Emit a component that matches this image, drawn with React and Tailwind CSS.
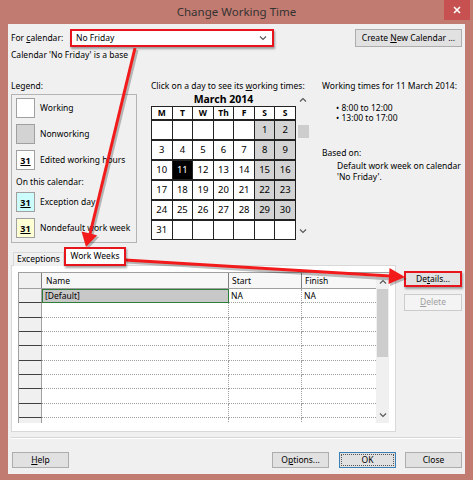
import React from 'react';

// March 2014 starts on a Saturday
const weeks = [
  [null, null, null, null, null, 1, 2],
  [3, 4, 5, 6, 7, 8, 9],
  [10, 11, 12, 13, 14, 15, 16],
  [17, 18, 19, 20, 21, 22, 23],
  [24, 25, 26, 27, 28, 29, 30],
  [31, null, null, null, null, null, null],
];

const dayNames = ['M', 'T', 'W', 'Th', 'F', 'S', 'S'];

const Btn = ({ children, className = '' }) => (
  <div className={`flex items-center justify-center border border-[#adadad] bg-[#e1e1e1] ${className}`}>
    <span className="whitespace-pre">{children}</span>
  </div>
);

const Chevron = ({ up, className = '' }) => (
  <svg width="8" height="5" viewBox="0 0 8 5" className={className}>
    <polyline
      points={up ? '1,4.5 4,1.5 7,4.5' : '1,0.5 4,3.5 7,0.5'}
      fill="none"
      stroke="#555"
      strokeWidth="1.1"
    />
  </svg>
);

const Swatch = ({ bg, label, mark }) => (
  <div className="flex items-center whitespace-nowrap">
    <div className={`flex h-[20px] w-[19px] shrink-0 items-center justify-center border border-[#a0a0a0] ${bg}`}>
      {mark && <span className="text-[9px] font-bold underline leading-none">31</span>}
    </div>
    <span className="ml-[5px]">{label}</span>
  </div>
);

const cellClass = (day, col) => {
  if (day === 11) return 'bg-black text-white';
  if (day && col >= 5) return 'bg-[#d3d3d3]';
  return 'bg-white';
};

const Calendar = () => (
  <div className="grid w-[145px] grid-cols-7 gap-x-px gap-y-[2px] border border-[#222] bg-[#222]">
    {dayNames.map((d, i) => (
      <div key={'h' + i} className="flex h-[12px] items-center justify-center bg-white font-bold leading-none">
        {d}
      </div>
    ))}
    {weeks.flatMap((week, r) =>
      week.map((day, c) => (
        <div
          key={r + '-' + c}
          className={`flex h-[18px] items-center justify-center text-[9.5px] ${cellClass(day, c)}`}
        >
          {day}
        </div>
      ))
    )}
  </div>
);

const WorkWeekTable = () => {
  const rows = Array.from({ length: 10 });
  return (
    <div className="flex h-[151px] w-[371px] overflow-hidden border-l border-t border-[#a0a0a0]">
      <div className="flex w-[357px] flex-col">
        {/* header */}
        <div className="flex h-[16px] shrink-0 border-b border-[#a0a0a0] bg-[#f7f7f7]">
          <div className="w-[23px] border-r border-[#808080] bg-[#f0f0f0]" />
          <div className="w-[187px] border-r border-[#808080] pl-[4px] leading-[15px]">Name</div>
          <div className="w-[73px] border-r border-[#808080] pl-[3px] leading-[15px]">Start</div>
          <div className="w-[74px] pl-[3px] leading-[15px]">Finish</div>
        </div>
        {rows.map((_, i) => (
          <div key={i} className="flex h-[14.33px] shrink-0">
            <div className="w-[23px] border-b border-r border-[#404040] border-r-[#a0a0a0] bg-[#f0f0f0]" />
            {i === 0 ? (
              <div className="w-[187px] border border-[#2f7d3a] bg-[#c8c8c8] pl-[2px] leading-[12px]">[Default]</div>
            ) : (
              <div className="w-[187px] border-b border-r border-dotted border-[#a0a0a0] bg-white" />
            )}
            <div className="w-[73px] border-b border-r border-dotted border-[#a0a0a0] bg-white pl-[2px] leading-[13px]">
              {i === 0 ? 'NA' : ''}
            </div>
            <div className="w-[74px] border-b border-dotted border-[#a0a0a0] bg-white pl-[2px] leading-[13px]">
              {i === 0 ? 'NA' : ''}
            </div>
          </div>
        ))}
      </div>
      {/* scrollbar */}
      <div className="flex w-[13px] flex-col items-center bg-[#f0f0f0]">
        <div className="flex h-[16px] items-center">
          <Chevron up />
        </div>
        <div className="h-[68px] w-[11px] bg-[#cdcdcd]" />
        <div className="flex-1" />
        <div className="mb-[2px] flex h-[12px] items-center">
          <Chevron />
        </div>
      </div>
    </div>
  );
};

export default function App() {
  return (
    <div className="relative flex h-[480px] w-[473px] flex-col bg-[#c27b70] font-['Noto_Sans',sans-serif] text-[8.5px] text-black">
      {/* Title bar */}
      <div className="relative flex h-[24px] shrink-0 items-center justify-center">
        <span className="text-[11.5px] text-[#333]">Change Working Time</span>
        <div className="absolute right-[3px] top-0 flex h-[20px] w-[26px] items-center justify-center bg-[#c75050]">
          <svg width="8" height="8" viewBox="0 0 8 8">
            <path d="M1 1 L7 7 M7 1 L1 7" stroke="#fff" strokeWidth="1.6" />
          </svg>
        </div>
      </div>

      {/* Client area */}
      <div className="mx-[8px] mb-[6px] flex flex-1 flex-col bg-[#f0f0f0] px-[3px]">
        {/* For calendar row */}
        <div className="mt-[5px] flex h-[18px] items-center">
          <span className="w-[59px]">
            For <span className="underline">c</span>alendar:
          </span>
          <div className="flex h-[18px] w-[204px] items-center justify-between border-2 border-[#e8141b] bg-white pl-[4px] pr-[5px] shadow-[1px_2px_2px_rgba(0,0,0,0.35)]">
            <span>No Friday</span>
            <Chevron />
          </div>
          <div className="flex-1" />
          <Btn className="h-[18px] w-[107px]">
            Create <span className="underline">N</span>ew Calendar ...
          </Btn>
        </div>
        <div className="mt-[2px] h-[12px] leading-[12px]">Calendar 'No Friday' is a base</div>

        {/* Legend / calendar / details */}
        <div className="mt-[19px] flex">
          {/* Legend */}
          <div className="w-[126px]">
            <div className="h-[12px] leading-[12px]">Legend:</div>
            <div className="mt-[2px] flex h-[149px] flex-col border border-[#b4b4b4] px-[4px] pt-[3px]">
              <Swatch bg="bg-white" label="Working" />
              <div className="mt-[6px]">
                <Swatch bg="bg-[#d3d3d3]" label="Nonworking" />
              </div>
              <div className="mt-[6px]">
                <Swatch bg="bg-white" label="Edited working hours" mark />
              </div>
              <div className="mt-[6px] h-[12px] leading-[12px]">On this calendar:</div>
              <div className="mt-[4px]">
                <Swatch bg="bg-[#ccfcfc]" label="Exception day" mark />
              </div>
              <div className="mt-[6px]">
                <Swatch bg="bg-[#ffffd4]" label="Nondefault work week" mark />
              </div>
            </div>
          </div>

          {/* Calendar */}
          <div className="ml-[14px] w-[160px] whitespace-nowrap">
            <div className="h-[12px] leading-[12px]">
              Click on a day to see its <span className="underline">w</span>orking times:
            </div>
            <div className="flex">
              <div>
                <div className="h-[14px] text-center text-[10.5px] font-bold leading-[14px]">March 2014</div>
                <Calendar />
              </div>
              <div className="ml-[1px] flex w-[12px] flex-col items-center">
                <div className="flex h-[14px] items-center">
                  <Chevron up />
                </div>
                <div className="mt-[19px] h-[13px] w-[11px] bg-[#cdcdcd]" />
                <div className="flex-1" />
                <div className="mb-[4px] flex h-[10px] items-center">
                  <Chevron />
                </div>
              </div>
            </div>
          </div>

          {/* Working times */}
          <div className="ml-[11px] flex-1 whitespace-nowrap">
            <div className="h-[12px] leading-[12px]">Working times for 11 March 2014:</div>
            <div className="mt-[11px] pl-[14px] leading-[10px]">
              <div>• 8:00 to 12:00</div>
              <div>• 13:00 to 17:00</div>
            </div>
            <div className="mt-[24px] h-[12px] leading-[12px]">Based on:</div>
            <div className="mt-[2px] pl-[15px] leading-[10.5px]">
              <div>Default work week on calendar</div>
              <div>'No Friday'.</div>
            </div>
          </div>
        </div>

        {/* Tabs + side buttons */}
        <div className="mt-[4px] flex">
          <div className="w-[385px]">
            <div className="relative z-10 -mb-px flex h-[19px] items-end">
              <div className="ml-[2px] flex h-[14px] w-[51px] items-center justify-center border border-b-0 border-[#d9d9d9] bg-[#f0f0f0]">
                Exceptions
              </div>
              <div className="flex h-[19px] w-[62px] items-center justify-center border-2 border-[#e8141b] bg-white shadow-[1px_2px_2px_rgba(0,0,0,0.35)]">
                Work Weeks
              </div>
            </div>
            <div className="h-[167px] border border-[#d9d9d9] bg-white pl-[6px] pt-[6px]">
              <WorkWeekTable />
            </div>
          </div>
          <div className="ml-[8px] flex flex-col pt-[24px]">
            <Btn className="h-[16px] w-[58px] border-2 border-[#e8141b] shadow-[1px_2px_2px_rgba(0,0,0,0.35)]">
              De<span className="underline">t</span>ails...
            </Btn>
            <div className="mt-[7px] flex h-[17px] w-[58px] items-center justify-center border border-[#cccccc] bg-[#f4f4f4] text-[#a0a0a0]">
              <span>
                <span className="underline">D</span>elete
              </span>
            </div>
          </div>
        </div>

        {/* separator */}
        <div className="mt-[5px] h-px w-[451px] bg-[#d7d7d7]" />
        <div className="h-px w-[451px] bg-white" />

        {/* bottom buttons */}
        <div className="mt-[13px] flex h-[16px] pl-[1px]">
          <Btn className="h-[16px] w-[57px]">
            <span className="underline">H</span>elp
          </Btn>
          <div className="flex-1" />
          <Btn className="h-[16px] w-[57px]">
            O<span className="underline">p</span>tions...
          </Btn>
          <div className="ml-[10px] flex h-[16px] w-[57px] items-center justify-center border border-[#3c7fb1] bg-[#e1e1e1] p-[1px]">
            <div className="flex h-full w-full items-center justify-center border border-dotted border-[#555]">OK</div>
          </div>
          <Btn className="ml-[9px] h-[16px] w-[57px]">Close</Btn>
        </div>
      </div>

      {/* Annotation arrows */}
      <svg className="pointer-events-none absolute left-0 top-0" width="473" height="480" viewBox="0 0 473 480">
        <g fill="rgba(0,0,0,0.25)" stroke="rgba(0,0,0,0.25)">
          <line x1="137" y1="50" x2="92" y2="235" strokeWidth="3" />
          <polygon points="88,249 99,237 83,233" stroke="none" />
          <line x1="127" y1="262" x2="391" y2="279" strokeWidth="3" />
          <polygon points="407,279 391,270 390,286" stroke="none" />
        </g>
        <g fill="#f21a1a" stroke="#f21a1a">
          <line x1="135" y1="48" x2="90" y2="234" strokeWidth="3" />
          <polygon points="86,247 97.1,235.3 81.5,231.5" stroke="none" />
          <line x1="125" y1="260" x2="390" y2="276" strokeWidth="3" />
          <polygon points="405,277 389.5,268 388.5,284" stroke="none" />
        </g>
      </svg>
    </div>
  );
}
